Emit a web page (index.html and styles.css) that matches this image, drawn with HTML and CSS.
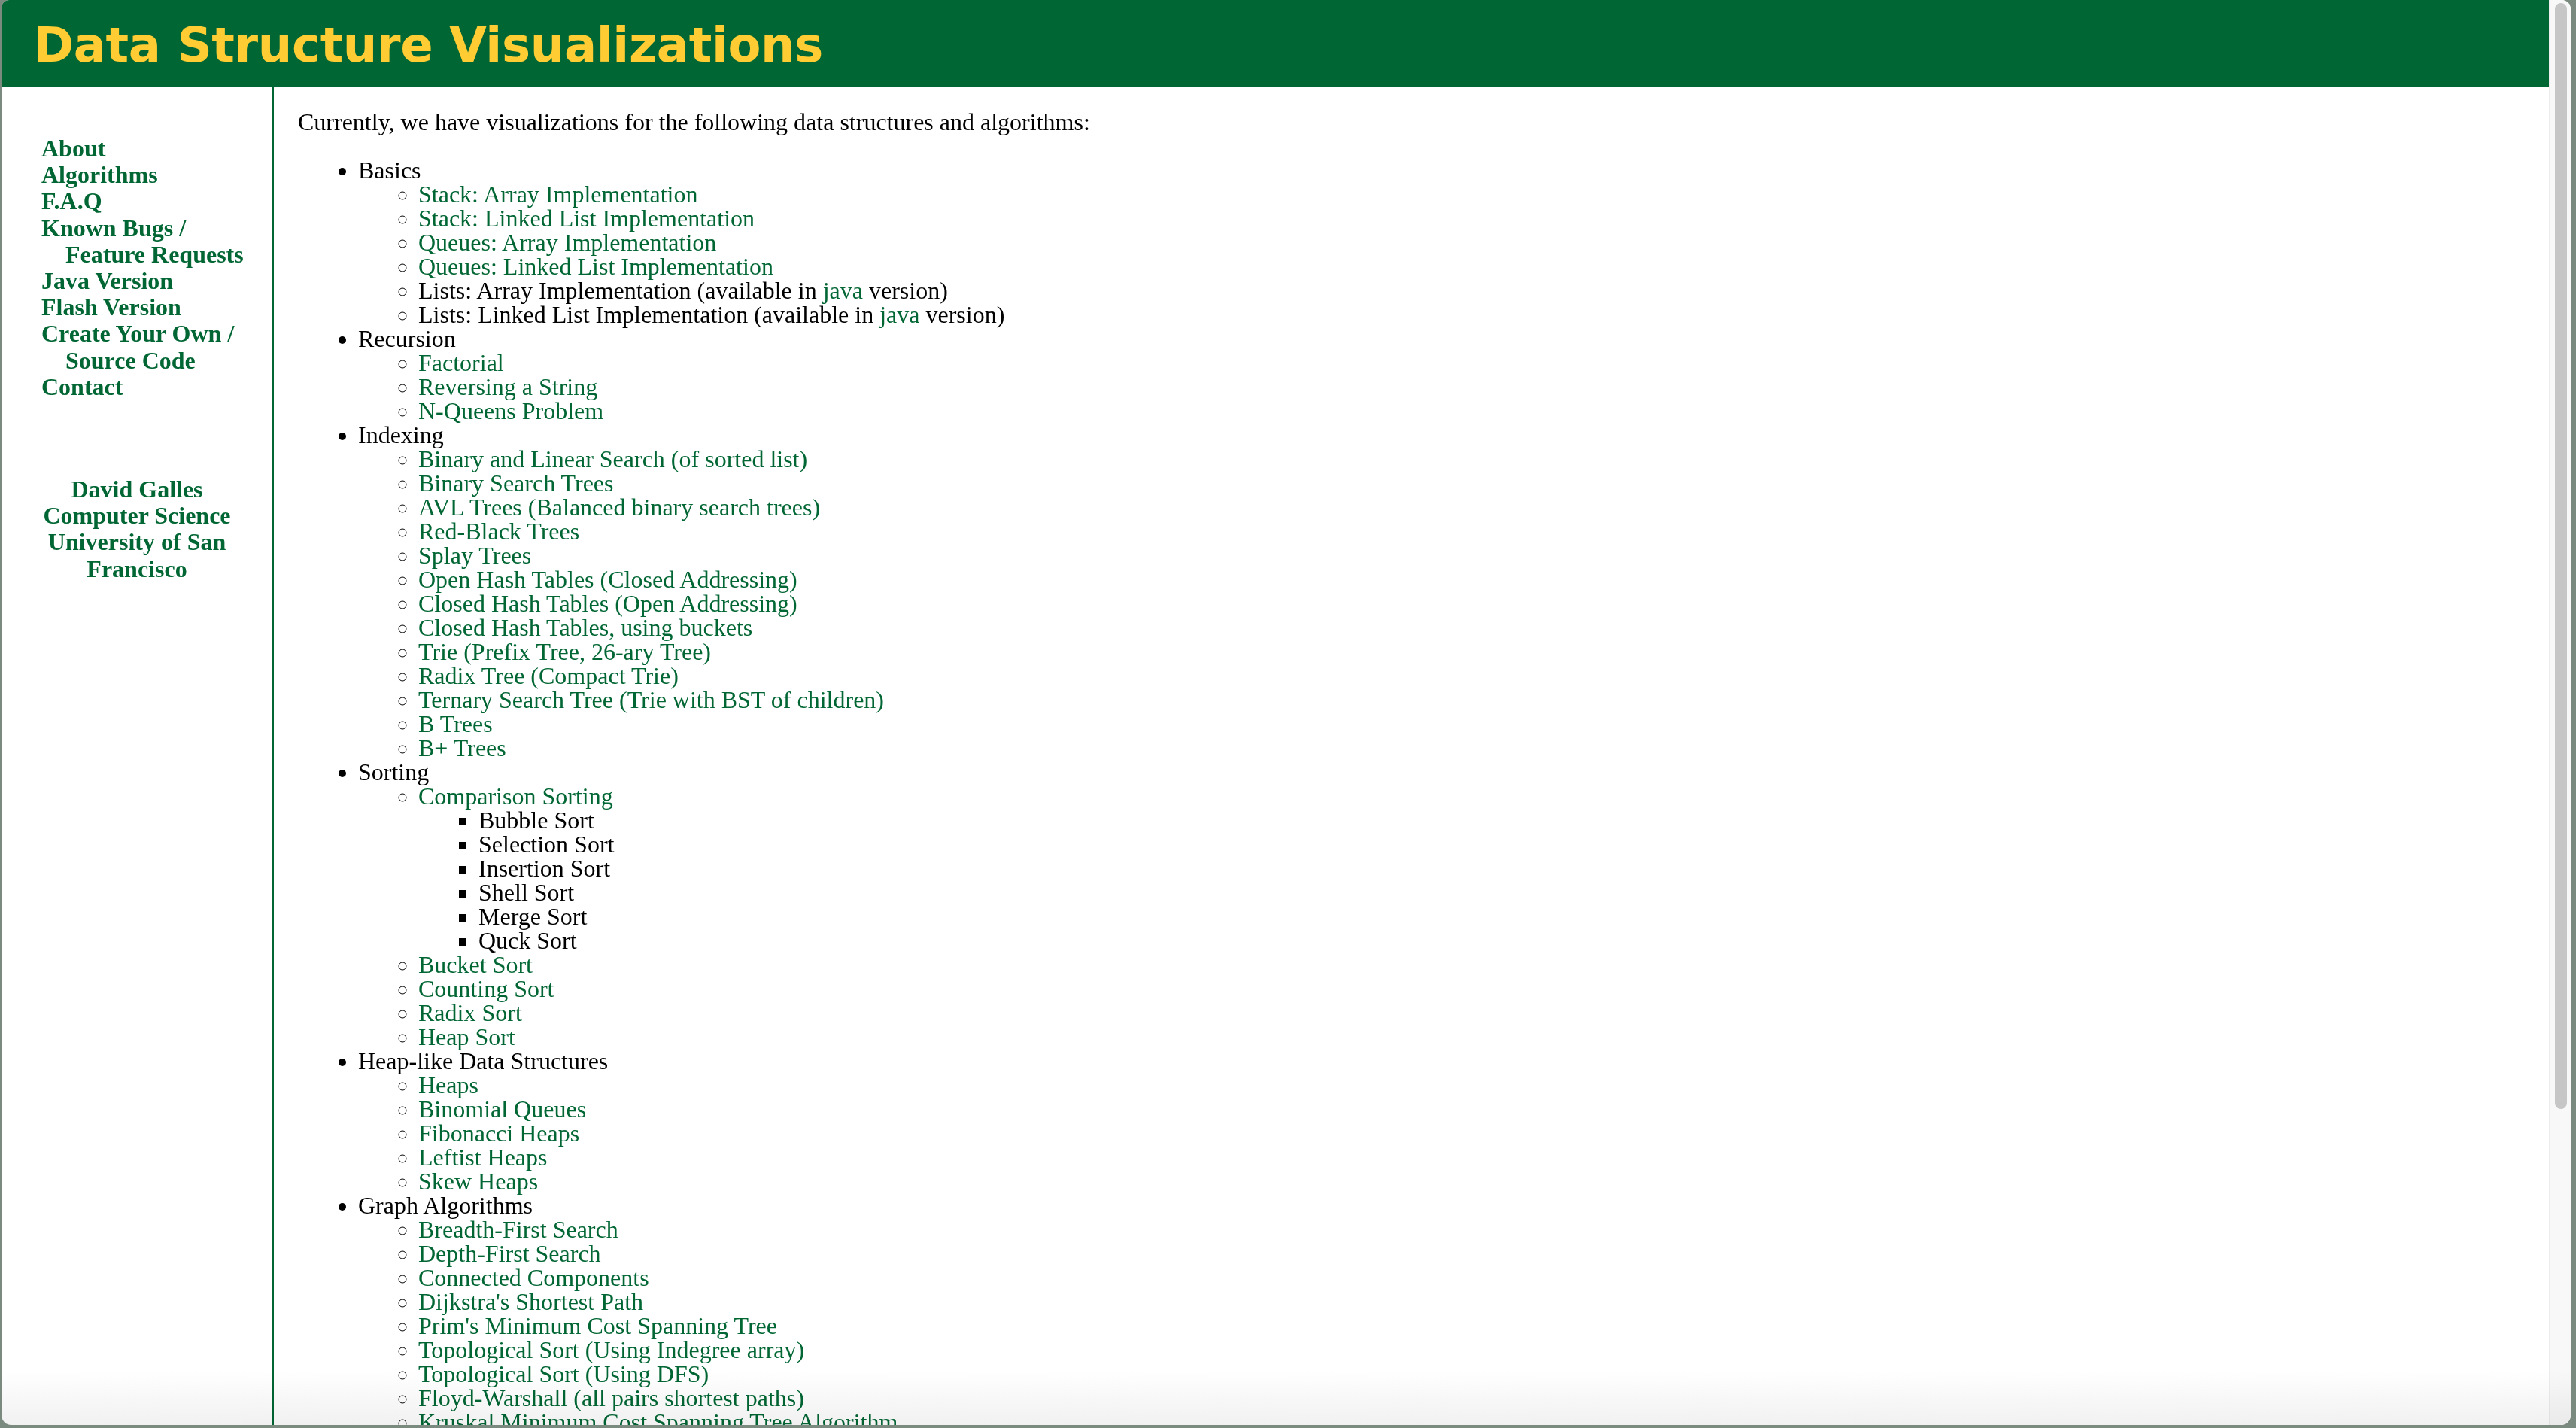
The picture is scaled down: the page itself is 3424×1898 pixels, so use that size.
FILE: index.html
```html
<!DOCTYPE html>
<html lang="en">
<head>
<meta charset="utf-8">
<title>Data Structure Visualizations</title>
<link rel="stylesheet" href="styles.css">
</head>
<body>
<div class="window">
  <div class="viewport">
    <header class="banner"><h1>Data Structure Visualizations</h1></header>
    <div class="layout">
      <nav class="sidebar">
        <div class="nav-item"><a href="#">About</a></div>
        <div class="nav-item"><a href="#">Algorithms</a></div>
        <div class="nav-item"><a href="#">F.A.Q</a></div>
        <div class="nav-item"><a href="#">Known Bugs /<br>Feature Requests</a></div>
        <div class="nav-item"><a href="#">Java Version</a></div>
        <div class="nav-item"><a href="#">Flash Version</a></div>
        <div class="nav-item"><a href="#">Create Your Own /<br>Source Code</a></div>
        <div class="nav-item"><a href="#">Contact</a></div>
        <div class="credit"><a href="#">David Galles</a><br><a href="#">Computer Science</a><br><a href="#">University of San<br>Francisco</a></div>
      </nav>
      <main class="content">
        <p>Currently, we have visualizations for the following data structures and algorithms:</p>
        <ul class="topics">
          <li>Basics
            <ul>
              <li><a href="#">Stack: Array Implementation</a></li>
              <li><a href="#">Stack: Linked List Implementation</a></li>
              <li><a href="#">Queues: Array Implementation</a></li>
              <li><a href="#">Queues: Linked List Implementation</a></li>
              <li>Lists: Array Implementation (available in <a href="#">java</a> version)</li>
              <li>Lists: Linked List Implementation (available in <a href="#">java</a> version)</li>
            </ul>
          </li>
          <li>Recursion
            <ul>
              <li><a href="#">Factorial</a></li>
              <li><a href="#">Reversing a String</a></li>
              <li><a href="#">N-Queens Problem</a></li>
            </ul>
          </li>
          <li>Indexing
            <ul>
              <li><a href="#">Binary and Linear Search (of sorted list)</a></li>
              <li><a href="#">Binary Search Trees</a></li>
              <li><a href="#">AVL Trees (Balanced binary search trees)</a></li>
              <li><a href="#">Red-Black Trees</a></li>
              <li><a href="#">Splay Trees</a></li>
              <li><a href="#">Open Hash Tables (Closed Addressing)</a></li>
              <li><a href="#">Closed Hash Tables (Open Addressing)</a></li>
              <li><a href="#">Closed Hash Tables, using buckets</a></li>
              <li><a href="#">Trie (Prefix Tree, 26-ary Tree)</a></li>
              <li><a href="#">Radix Tree (Compact Trie)</a></li>
              <li><a href="#">Ternary Search Tree (Trie with BST of children)</a></li>
              <li><a href="#">B Trees</a></li>
              <li><a href="#">B+ Trees</a></li>
            </ul>
          </li>
          <li>Sorting
            <ul>
              <li><a href="#">Comparison Sorting</a>
                <ul>
                  <li>Bubble Sort</li>
                  <li>Selection Sort</li>
                  <li>Insertion Sort</li>
                  <li>Shell Sort</li>
                  <li>Merge Sort</li>
                  <li>Quck Sort</li>
                </ul>
              </li>
              <li><a href="#">Bucket Sort</a></li>
              <li><a href="#">Counting Sort</a></li>
              <li><a href="#">Radix Sort</a></li>
              <li><a href="#">Heap Sort</a></li>
            </ul>
          </li>
          <li>Heap-like Data Structures
            <ul>
              <li><a href="#">Heaps</a></li>
              <li><a href="#">Binomial Queues</a></li>
              <li><a href="#">Fibonacci Heaps</a></li>
              <li><a href="#">Leftist Heaps</a></li>
              <li><a href="#">Skew Heaps</a></li>
            </ul>
          </li>
          <li>Graph Algorithms
            <ul>
              <li><a href="#">Breadth-First Search</a></li>
              <li><a href="#">Depth-First Search</a></li>
              <li><a href="#">Connected Components</a></li>
              <li><a href="#">Dijkstra's Shortest Path</a></li>
              <li><a href="#">Prim's Minimum Cost Spanning Tree</a></li>
              <li><a href="#">Topological Sort (Using Indegree array)</a></li>
              <li><a href="#">Topological Sort (Using DFS)</a></li>
              <li><a href="#">Floyd-Warshall (all pairs shortest paths)</a></li>
              <li><a href="#">Kruskal Minimum Cost Spanning Tree Algorithm</a></li>
            </ul>
          </li>
          <li>Dynamic Programming
            <ul>
              <li><a href="#">Calculating nth Fibonacci number</a></li>
              <li><a href="#">Making Change</a></li>
              <li><a href="#">Longest Common Subsequence</a></li>
            </ul>
          </li>
        </ul>
      </main>
    </div>
  </div>
  <div class="scrollbar"><div class="thumb"></div></div>
  <div class="fade"></div>
</div>
</body>
</html>
```

FILE: styles.css
```css
html, body {
  margin: 0;
  height: 100%;
}

body {
  background: #7b8a7e;
  overflow: hidden;
  font-family: "Liberation Serif", "Times New Roman", serif;
  color: #000;
}

a {
  color: #006633;
  text-decoration: none;
}

.window {
  position: relative;
  display: flex;
  height: 1894px;
  margin: 0 7px 0 2px;
  border-radius: 10px 12px 13px 13px;
  overflow: hidden;
  background: #fff;
}

.viewport {
  flex: 1;
  min-width: 0;
  overflow: hidden;
}

.banner {
  height: 115px;
  box-sizing: border-box;
  padding: 28px 0 0 43px;
  background: #006633;
}

.banner h1 {
  margin: 0;
  font-family: "DejaVu Sans", Verdana, sans-serif;
  font-weight: bold;
  font-size: 64px;
  line-height: 64px;
  letter-spacing: -0.35px;
  color: #ffcc33;
  white-space: nowrap;
}

.layout {
  display: flex;
  align-items: stretch;
}

.sidebar {
  flex: none;
  width: 362px;
  box-sizing: border-box;
  padding: 65px 53px 0 53px;
  border-right: 2px solid #006633;
}

.nav-item {
  font-weight: bold;
  font-size: 32px;
  line-height: 35.2px;
  padding-left: 32px;
  text-indent: -32px;
  white-space: nowrap;
}

.credit {
  margin-top: 101px;
  text-align: center;
  font-weight: bold;
  font-size: 32px;
  line-height: 35.2px;
  white-space: nowrap;
}

.content {
  flex: 1;
  padding: 31px 0 0 32px;
  font-size: 32px;
  line-height: 32px;
}

.content p {
  margin: 0 0 32px;
}

.content ul {
  margin: 0;
  padding-left: 80px;
}

.scrollbar {
  flex: none;
  width: 29px;
  box-sizing: border-box;
  padding: 4px 5px 0 6px;
  background: #f8f8f8;
  border-left: 2px solid #ececec;
}

.thumb {
  height: 1470px;
  border-radius: 8px;
  background: #c6c6c6;
}

.fade {
  position: absolute;
  left: 0;
  right: 0;
  bottom: 0;
  height: 72px;
  background: linear-gradient(#ffffff, #f1f1f1);
  mix-blend-mode: multiply;
  pointer-events: none;
}
```
